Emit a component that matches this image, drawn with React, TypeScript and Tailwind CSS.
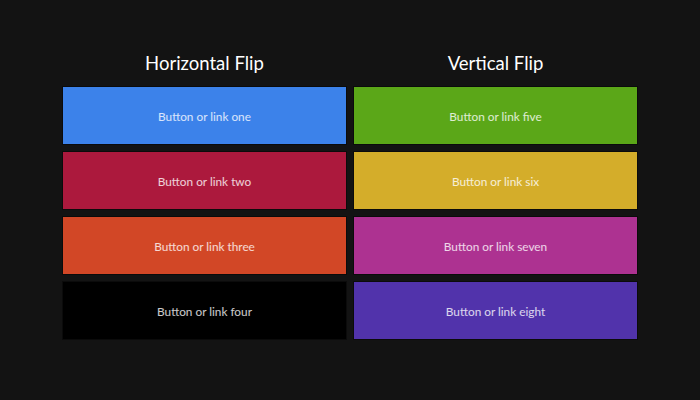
import React from 'react'

type Tile = { label: string; bg: string }

const horizontal: Tile[] = [
  { label: 'Button or link one', bg: 'bg-[#3c82ea]' },
  { label: 'Button or link two', bg: 'bg-[#ac193d]' },
  { label: 'Button or link three', bg: 'bg-[#d24726]' },
  { label: 'Button or link four', bg: 'bg-[#000000]' },
]

const vertical: Tile[] = [
  { label: 'Button or link five', bg: 'bg-[#5ba718]' },
  { label: 'Button or link six', bg: 'bg-[#d4ad2a]' },
  { label: 'Button or link seven', bg: 'bg-[#ad3291]' },
  { label: 'Button or link eight', bg: 'bg-[#5133ab]' },
]

function Column({ title, tiles }: { title: string; tiles: Tile[] }) {
  return (
    <div className="flex w-[285px] flex-col">
      <h2 className="h-[37px] pt-px text-center text-[18.5px] leading-[26px] text-white">{title}</h2>
      <div className="flex flex-col gap-[6px]">
        {tiles.map((t) => (
          <a
            key={t.label}
            href="#"
            className={`flex h-[59px] items-center justify-center border border-[#0b0b0b] pt-[2px] text-[11.8px] text-white/80 ${t.bg}`}
          >
            {t.label}
          </a>
        ))}
      </div>
    </div>
  )
}

export default function App() {
  return (
    <div
      className="flex h-[400px] w-[700px] justify-center gap-[6px] bg-[#131313] pt-[49px]"
      style={{ fontFamily: 'Lato, sans-serif' }}
    >
      <Column title="Horizontal Flip" tiles={horizontal} />
      <Column title="Vertical Flip" tiles={vertical} />
    </div>
  )
}
